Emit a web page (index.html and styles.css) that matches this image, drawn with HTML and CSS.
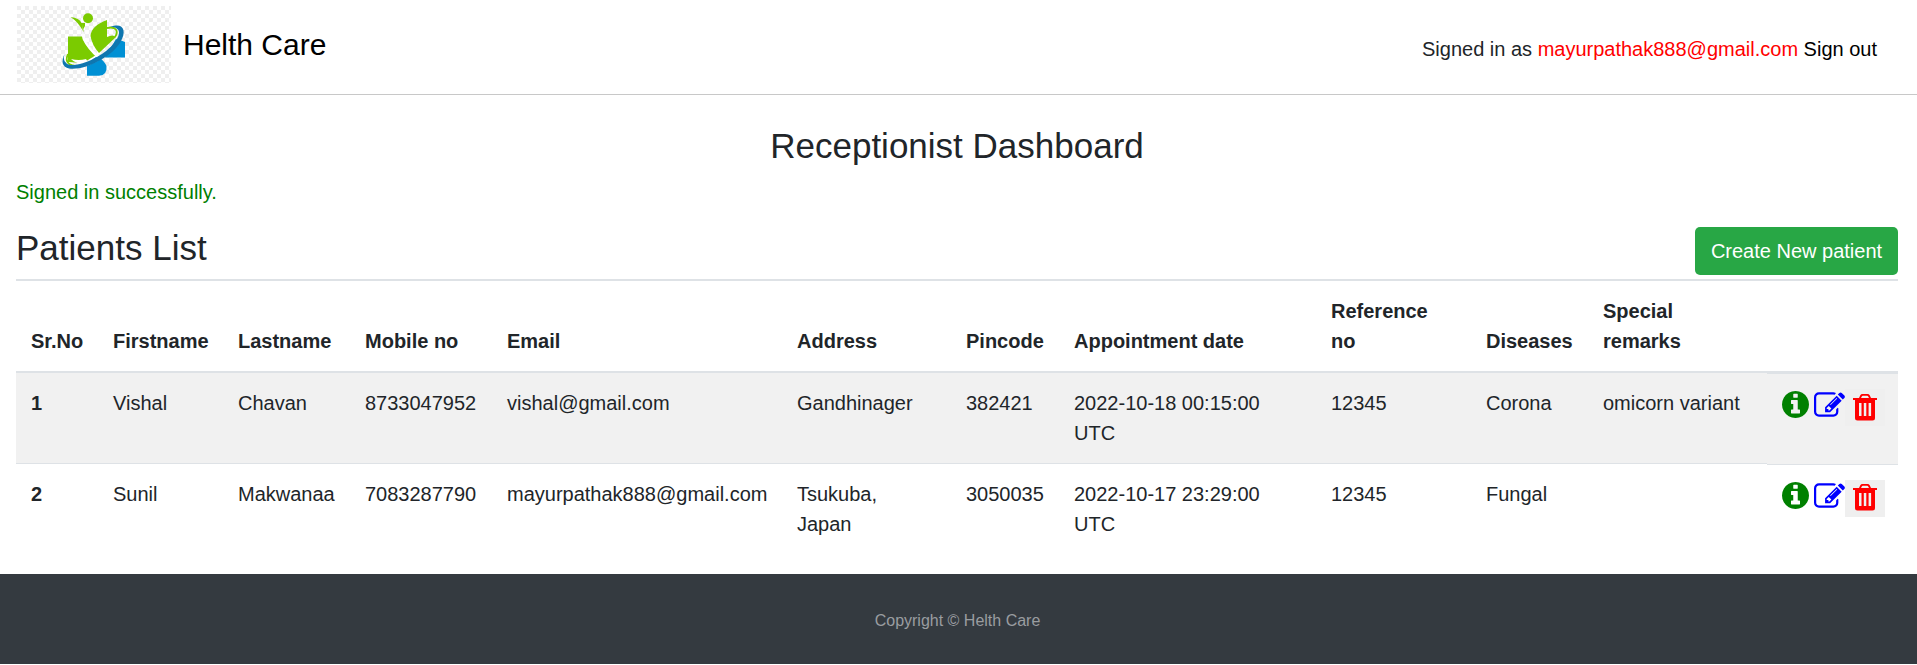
FILE: index.html
```html
<!DOCTYPE html>
<html lang="en">
<head>
<meta charset="utf-8">
<title>Helth Care</title>
<link rel="stylesheet" href="styles.css">
</head>
<body>
<svg class="sprite" aria-hidden="true">
  <symbol id="info" viewBox="128 128 1536 1536"><path d="M1152 1376v-160q0-14-9-23t-23-9h-96v-512q0-14-9-23t-23-9h-320q-14 0-23 9t-9 23v160q0 14 9 23t23 9h96v320h-96q-14 0-23 9t-9 23v160q0 14 9 23t23 9h448q14 0 23-9t9-23zm-128-896v-160q0-14-9-23t-23-9h-192q-14 0-23 9t-9 23v160q0 14 9 23t23 9h192q14 0 23-9t9-23zm640 416q0 209-103 385.500t-279.500 279.500-385.500 103-385.500-103-279.500-279.500-103-385.500 103-385.500 279.500-279.500 385.500-103 385.500 103 279.500 279.500 103 385.500z"/></symbol>
  <symbol id="edit" viewBox="0 128 1792 1408"><path d="M888 1184l116-116-152-152-116 116v56h96v96h56zm440-720q-16-16-33 1l-350 350q-17 17-1 33t33-1l350-350q17-17 1-33zm80 594v190q0 119-84.500 203.500t-203.500 84.500h-832q-119 0-203.500-84.500t-84.500-203.500v-832q0-119 84.500-203.500t203.500-84.500h832q63 0 117 25 15 7 18 23 3 17-9 29l-49 49q-14 14-32 8-23-6-45-6h-832q-66 0-113 47t-47 113v832q0 66 47 113t113 47h832q66 0 113-47t47-113v-126q0-13 9-22l64-64q15-15 35-7t20 29zm-96-738l288 288-672 672h-288v-288zm444 132l-92 92-288-288 92-92q28-28 68-28t68 28l152 152q28 28 28 68t-28 68z"/></symbol>
  <symbol id="trash" viewBox="0 0 24 27"><path fill-rule="evenodd" d="M0 4h6l1.300-2.700Q8 0 9.500 0h5q1.500 0 2.200 1.300L18 4h6v2h-2v18q0 2.500-2.500 2.500h-15Q2 26.500 2 24V6H0zM8 4h8l-.8-1.600q-.3-.6-1-.6H9.800q-.7 0-1 .6zM6 9v13h2.500V9zM10.800 9v13h2.500V9zM15.600 9v13h2.500V9z"/></symbol>
</svg>
<header class="topbar">
  <a class="brand">
    <svg class="logo" viewBox="0 0 154 77">
      <defs><pattern id="check" width="8" height="8" patternUnits="userSpaceOnUse"><path fill="#efefef" d="M0 0h4v4H0zM4 4h4v4H4z"/></pattern></defs>
      <rect width="154" height="77" fill="#fff"/>
      <rect width="154" height="77" fill="url(#check)"/>
      <path fill="#0090d4" d="M99 33q7 2 9 3V51.500H88zM70 58l9-7h3q6 5 7.500 9 1 9-7.500 9.800H70z"/>
      <path fill="#7bcb00" d="M51 30.500h14q3 10 15 18L66 57l-15-1zM90 14v17q6-3 9 0L82 47q-7-8-8.500-17Q74 20 90 14zM53.500 11q9 1 11 6l3.500 0v3q-2 2-1.500 6-5-10-13-15z"/>
      <circle cx="71" cy="12.200" r="5" fill="#7bcb00"/>
      <path fill="none" stroke="#fff" stroke-width="2" d="M48 51c-1 14 20 12 39-1 16-11 21-23 17-28"/>
      <path fill="none" stroke="#7bcb00" stroke-width="1.800" d="M51 48c-4 9 2 12 10 12M90 22c9-2 12 3 8 9"/>
      <path fill="#fff" d="M54 53q8 2 15 0l2 3q-10 4-17-3zM65.500 18q0 14 6 21 6 8 13 11l-3 3Q70 43 65.500 33z"/>
      <path fill="#0f76af" d="M47.500 48q-3 9 6 11c13 1 33-10 42-20 9-10 9-18-2-18 12-5 17 3 10 15C96 50 68 65 52 62.500Q42 60 47.500 48z"/>
    </svg>
    <span class="brand-name">Helth Care</span>
  </a>
  <div class="session">Signed in as <span class="user">mayurpathak888@gmail.com</span> <a class="signout">Sign out</a></div>
</header>
<main class="content">
  <h1 class="title">Receptionist Dashboard</h1>
  <p class="notice">Signed in successfully.</p>
  <div class="list-head">
    <h2 class="list-title">Patients List</h2>
    <a class="create">Create New patient</a>
  </div>
  <table class="patients">
    <colgroup><col class="c-sr"><col class="c-first"><col class="c-last"><col class="c-mobile"><col class="c-email"><col class="c-address"><col class="c-pin"><col class="c-date"><col class="c-ref"><col class="c-disease"><col class="c-remarks"><col class="c-actions"></colgroup>
    <thead>
      <tr><th>Sr.No</th><th>Firstname</th><th>Lastname</th><th>Mobile no</th><th>Email</th><th>Address</th><th>Pincode</th><th>Appointment date</th><th>Reference<br>no</th><th>Diseases</th><th>Special<br>remarks</th><th></th></tr>
    </thead>
    <tbody>
      <tr><th>1</th><td>Vishal</td><td>Chavan</td><td>8733047952</td><td>vishal@gmail.com</td><td>Gandhinager</td><td>382421</td><td>2022-10-18 00:15:00<br>UTC</td><td>12345</td><td>Corona</td><td>omicorn variant</td>
        <td class="actions"><div class="icons"><svg class="info"><use href="#info"/></svg><svg class="edit"><use href="#edit"/></svg><button class="delete"><svg class="trash"><use href="#trash"/></svg></button></div></td></tr>
      <tr><th>2</th><td>Sunil</td><td>Makwanaa</td><td>7083287790</td><td>mayurpathak888@gmail.com</td><td>Tsukuba,<br>Japan</td><td>3050035</td><td>2022-10-17 23:29:00<br>UTC</td><td>12345</td><td>Fungal</td><td></td>
        <td class="actions"><div class="icons"><svg class="info"><use href="#info"/></svg><svg class="edit"><use href="#edit"/></svg><button class="delete"><svg class="trash"><use href="#trash"/></svg></button></div></td></tr>
    </tbody>
  </table>
</main>
<footer class="footer">Copyright © Helth Care</footer>
</body>
</html>
```
FILE: styles.css
```css
* { box-sizing: border-box; }
body {
  margin: 0;
  background: #fff;
  color: #212529;
  font: 20px/30px "Liberation Sans", Arial, sans-serif;
}
.sprite { display: none; }
.topbar {
  display: flex;
  justify-content: space-between;
  height: 95px;
  padding: 6px 40px 0 17px;
  border-bottom: 1px solid #c8c8c8;
}
.brand { display: flex; color: #000; }
.logo { width: 154px; height: 77px; }
.brand-name { margin: 21px 0 0 12px; font-size: 30px; line-height: 36px; }
.session { padding-top: 28px; }
.user { color: #f00; }
.signout { color: #000; }
.content { padding: 30px 19px 19px 16px; }
.title { margin: 0; font-size: 35px; font-weight: 400; line-height: 42px; text-align: center; }
.notice { margin: 10px 0 0; color: green; }
.list-head { display: flex; justify-content: space-between; height: 72px; padding-top: 20px; }
.list-title { margin: 0; font-size: 35px; font-weight: 400; line-height: 42px; }
.create {
  width: 203px;
  height: 48px;
  border-radius: 5px;
  background: #28a745;
  color: #fff;
  line-height: 48px;
  text-align: center;
}
.patients { width: 1882px; table-layout: fixed; border-collapse: separate; border-spacing: 0; }
.c-sr { width: 82px; }
.c-first { width: 125px; }
.c-last { width: 127px; }
.c-mobile { width: 142px; }
.c-email { width: 290px; }
.c-address { width: 169px; }
.c-pin { width: 108px; }
.c-date { width: 257px; }
.c-ref { width: 155px; }
.c-disease { width: 117px; }
.c-remarks { width: 179px; }
.c-actions { width: 131px; }
.patients th, .patients td { padding: 15px; text-align: left; vertical-align: top; white-space: nowrap; }
.patients thead th { border: solid #dee2e6; border-width: 2px 0; vertical-align: bottom; }
.patients tbody th, .patients tbody td { height: 91px; }
.patients tbody tr:first-child > * { background: #f1f1f1; border-bottom: 1px solid #dee2e6; }
.patients tbody tr > .actions { border-top: 1px solid #dee2e6; border-bottom: 0; padding: 16px 12px 0 15px; }
.icons { display: flex; align-items: flex-start; }
.icons svg { display: block; }
.info { width: 27px; height: 27px; margin-top: 1px; fill: green; }
.edit { width: 31px; height: 25px; margin: 2px 0 0 5px; fill: blue; }
.delete { width: 40px; height: 37px; margin: -1px 0 0; padding: 4px 8px; border: 0; background: #efefef; }
.patients tr:last-child .trash { margin-top: -2px; }
.trash { width: 24px; height: 27px; fill: red; }
.footer {
  height: 90px;
  margin-bottom: 1px;
  padding-right: 2px;
  background: #343a40;
  color: #9a9da0;
  font-size: 16px;
  line-height: 94px;
  text-align: center;
}
```
